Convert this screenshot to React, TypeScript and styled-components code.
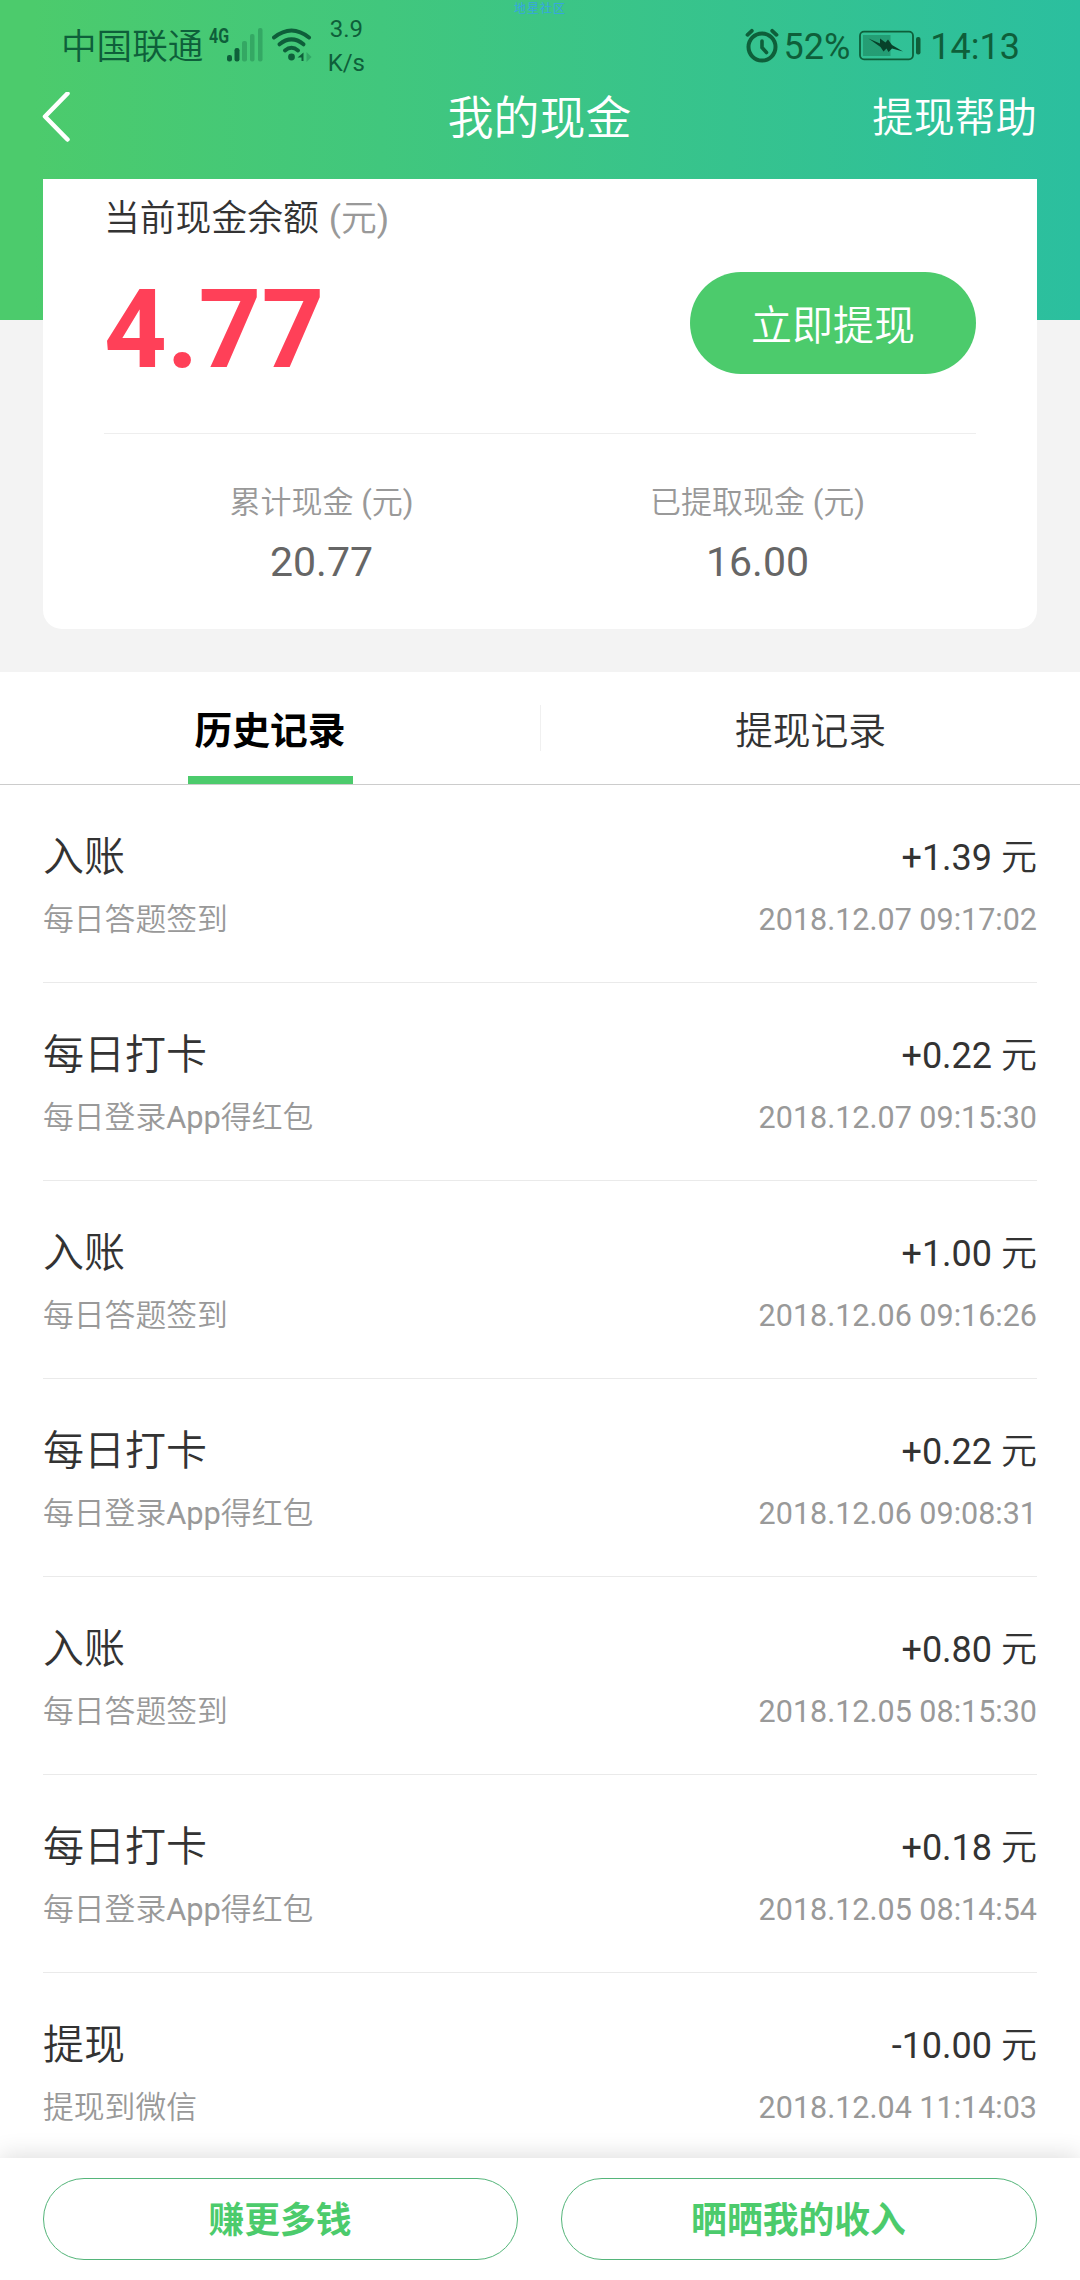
import React from 'react';
import styled, { createGlobalStyle, css } from 'styled-components';

const green = '#4ccb6c';
const ink = '#333';
const muted = '#999';
const statusInk = '#0e5f3a';

const GlobalStyle = createGlobalStyle`
  *, *::before, *::after { box-sizing: border-box; }
  body {
    margin: 0;
    background: #fff;
    color: ${ink};
    font-weight: 400;
  }
  button { font: inherit; padding: 0; margin: 0; border: 0; background: none; }
`;

const regularFont = css`
  font-family: Roboto, "Noto Sans CJK SC DemiLight", "Noto Sans CJK SC", sans-serif;
`;

const boldFont = css`
  font-family: Roboto, "Noto Sans CJK SC", sans-serif;
  font-weight: 700;
`;

const Screen = styled.div`
  ${regularFont}
  position: relative;
  display: flex;
  flex-direction: column;
  width: 1080px;
  height: 2280px;
  overflow: hidden;
  background: #fff;
`;

const Watermark = styled.span`
  position: absolute;
  top: 0;
  left: 514px;
  font-family: "Noto Sans CJK SC", sans-serif;
  font-size: 12px;
  line-height: 18px;
  letter-spacing: 1px;
  margin-top: -1px;
  color: #36a6e0;
`;

const Hero = styled.div`
  flex: none;
  height: 672px;
  background: linear-gradient(90deg, #4ccb6c 0%, #4ccb6c 3%, #2bbf9f 100%) no-repeat top / 100% 320px, #f3f3f3;
`;

const StatusBar = styled.div`
  display: flex;
  align-items: flex-start;
  height: 79px;
  padding: 0 60px 0 61px;
  color: ${statusInk};
`;

const Carrier = styled.span`
  margin-top: 21px;
  font-size: 35.6px;
  line-height: 52px;
`;

const NetworkType = styled.span`
  width: 19px;
  margin: 26px 0 0 6px;
  font-size: 21px;
  line-height: 20px;
  font-weight: 700;
  white-space: nowrap;
  transform: scaleX(0.76);
  transform-origin: left;
`;

const StatusIcon = styled.svg<{ $gap: number; $top: number }>`
  flex: none;
  margin: ${(p) => p.$top}px 0 0 ${(p) => p.$gap}px;
`;

const Speed = styled.span`
  width: 48px;
  margin: 13px 0 0 10px;
  font-size: 24px;
  line-height: 33.5px;
  text-align: center;
`;

const StatusText = styled.span<{ $gap?: number }>`
  margin: 21px 0 0 ${(p) => p.$gap ?? 0}px;
  font-size: 36px;
  line-height: 52px;
`;

const Spacer = styled.span`
  flex: 1;
`;

const TitleBar = styled.header`
  display: grid;
  grid-template-columns: 1fr auto 1fr;
  align-items: center;
  height: 100px;
  padding: 0 43px 0 42px;
  margin-top: -12px;
  color: #fff;
`;

const Title = styled.h1`
  margin: 2px 0 0;
  font-size: 46px;
  line-height: 60px;
  font-weight: 400;
`;

const Help = styled.button`
  justify-self: end;
  margin-top: 2px;
  font-size: 41.2px;
  line-height: 60px;
  color: #fff;
`;

const Card = styled.section`
  display: flex;
  flex-direction: column;
  height: 450px;
  margin: 12px 43px 0;
  padding: 0 61px;
  border-radius: 0 0 19px 19px;
  background: #fff;
`;

const Balance = styled.div`
  display: flex;
  align-items: flex-start;
  justify-content: space-between;
  height: 255px;
  border-bottom: 1px solid #eee;
`;

const BalanceLabel = styled.div`
  margin-top: 14px;
  font-size: 35.8px;
  line-height: 52px;
`;

const Unit = styled.span`
  margin-left: 1px;
  color: ${muted};
`;

const BalanceValue = styled.div`
  margin-top: 20px;
  font-size: 109.5px;
  line-height: 130px;
  font-weight: 700;
  color: #ff4058;
`;

const Withdraw = styled.button`
  width: 286px;
  height: 102px;
  margin-top: 93px;
  padding-top: 6px;
  border-radius: 51px;
  background: ${green};
  color: #fff;
  font-size: 41px;
  line-height: 96px;
`;

const Stats = styled.div`
  display: grid;
  grid-template-columns: 1fr 1fr;
  text-align: center;
`;

const StatLabel = styled.div`
  margin: 47px 0 0 -1px;
  font-size: 31px;
  line-height: 44px;
  color: ${muted};
`;

const StatValue = styled.div`
  margin: 9px 0 0 -1px;
  font-size: 41px;
  line-height: 56px;
  color: #666;
`;

const Tabs = styled.nav`
  flex: none;
  display: grid;
  grid-template-columns: 540px 1px 539px;
  height: 113px;
  border-bottom: 1px solid #ccc;
`;

const TabDivider = styled.span`
  height: 46px;
  margin-top: 33px;
  background: #f0f0f0;
`;

const Tab = styled.button<{ $active?: boolean }>`
  ${(p) => p.$active && boldFont}
  display: flex;
  flex-direction: column;
  align-items: center;
  justify-content: space-between;
  padding-top: 31px;
  font-size: 37.8px;
  line-height: 56px;
  color: ${(p) => (p.$active ? '#000' : ink)};
  &::after {
    content: '';
    width: 165px;
    height: 8px;
    background: ${(p) => (p.$active ? green : 'transparent')};
  }
`;

const List = styled.ul`
  flex: 1;
  min-height: 0;
  margin: 0;
  padding: 0 43px;
  list-style: none;
  overflow: hidden;
`;

const Row = styled.li`
  display: flex;
  justify-content: space-between;
  height: 198px;
  padding-top: 41px;
  border-bottom: 1px solid #eaeaea;
`;

const RowSide = styled.div<{ $end?: boolean }>`
  display: flex;
  flex-direction: column;
  text-align: ${(p) => (p.$end ? 'right' : 'left')};
`;

const RowTitle = styled.span`
  height: 64px;
  padding-top: 1px;
  font-size: 41px;
  line-height: 60px;
`;

const RowAmount = styled.span`
  height: 64px;
  font-size: 36px;
  line-height: 64px;
`;

const RowMeta = styled.span`
  font-size: 30.8px;
  line-height: 60px;
  color: ${muted};
`;

const RowDate = styled(RowMeta)`
  font-size: 30.5px;
  line-height: 60px;
`;

const Footer = styled.footer`
  position: relative;
  flex: none;
  display: grid;
  grid-template-columns: 475px 476px;
  gap: 43px;
  height: 122px;
  padding: 20px 43px;
  background: #fff;
  box-shadow: 0 -4px 22px rgba(0, 0, 0, 0.12);
`;

const FooterButton = styled.button`
  ${boldFont}
  height: 82px;
  padding: 5px 1px 0 0;
  border: 1px solid #55b57a;
  border-radius: 41px;
  color: ${green};
  font-size: 35.8px;
  line-height: 75px;
`;

const records = [
  { title: '入账', note: '每日答题签到', amount: '+1.39 元', date: '2018.12.07 09:17:02' },
  { title: '每日打卡', note: '每日登录App得红包', amount: '+0.22 元', date: '2018.12.07 09:15:30' },
  { title: '入账', note: '每日答题签到', amount: '+1.00 元', date: '2018.12.06 09:16:26' },
  { title: '每日打卡', note: '每日登录App得红包', amount: '+0.22 元', date: '2018.12.06 09:08:31' },
  { title: '入账', note: '每日答题签到', amount: '+0.80 元', date: '2018.12.05 08:15:30' },
  { title: '每日打卡', note: '每日登录App得红包', amount: '+0.18 元', date: '2018.12.05 08:14:54' },
  { title: '提现', note: '提现到微信', amount: '-10.00 元', date: '2018.12.04 11:14:03' },
];

const Signal = () => (
  <StatusIcon $gap={-1} $top={28} width="36" height="34" viewBox="0 0 36 34" fill={statusInk}>
    <rect x="0" y="27" width="5" height="6.5" rx="2.2" />
    <rect x="7.5" y="20" width="5" height="13.5" rx="2.2" />
    <g opacity="0.3">
      <rect x="15" y="13" width="5" height="20.5" rx="2" />
      <rect x="23" y="6" width="4.5" height="27.5" rx="2" />
      <rect x="31" y="0" width="4.5" height="33.5" rx="2" />
    </g>
  </StatusIcon>
);

const Wifi = () => (
  <StatusIcon $gap={9} $top={28} width="40" height="34" viewBox="0 0 40 34" fill="none" stroke={statusInk} strokeWidth="4" strokeLinecap="round">
    <path d="M2 9.5Q19.5-4.5 37 9.5" />
    <path d="M7.5 16.3Q19.5 6.5 31.5 16.3" />
    <path d="M13 22.5Q19.5 17 26 22.5" />
    <circle cx="19.5" cy="29" r="3.4" fill={statusInk} stroke="none" />
    <path d="M25.500 29.500l6-5v8.500h-2v-3.500z" fill={statusInk} stroke="none" />
    <path d="M34.500 24l5 5-5 5z" fill={statusInk} stroke="none" opacity="0.3" />
  </StatusIcon>
);

const Alarm = () => (
  <StatusIcon $gap={0} $top={28} width="34" height="35" viewBox="0 0 34 35" fill="none" stroke={statusInk} strokeLinecap="round">
    <circle cx="17" cy="19" r="13.5" strokeWidth="4" />
    <path d="M17 13V19.500l4.500 5" strokeWidth="3.600" />
    <path d="M2.500 6.800L6.800 2.800M31.500 6.800L27.200 2.800" strokeWidth="3.800" />
  </StatusIcon>
);

const Battery = () => (
  <StatusIcon $gap={9} $top={30} width="62" height="31" viewBox="0 0 62 31">
    <rect x="1" y="1.700" width="53" height="27.600" rx="4" fill="none" stroke={statusInk} strokeWidth="1.800" />
    <rect x="4" y="5" width="27.500" height="21" fill={statusInk} opacity="0.36" />
    <path d="M9.500 8.500L21 13.500V8.500L26.500 12.500 29 9.500 33 15 44 21.500 33 18.500 29.500 22 27.500 18.500 24.500 21.500 21.500 17Z" fill="#07412a" />
    <rect x="57" y="7" width="4.500" height="17.500" rx="2" fill={statusInk} />
  </StatusIcon>
);

const BackIcon = () => (
  <svg width="28" height="50" viewBox="0 1 28 50" fill="none" stroke="#fff" strokeWidth="4.500">
    <path d="M25.500 1.500L3 24.500 25.500 47.500" strokeLinejoin="round" strokeLinecap="round" transform="translate(0 1)" />
  </svg>
);

export default function App() {
  return (
    <Screen>
      <GlobalStyle />
      <Hero>
        <StatusBar>
          <Carrier>中国联通</Carrier>
          <NetworkType>4G</NetworkType>
          <Signal />
          <Wifi />
          <Speed>3.9 K/s</Speed>
          <Spacer />
          <Alarm />
          <StatusText $gap={5}>52%</StatusText>
          <Battery />
          <StatusText $gap={9}>14:13</StatusText>
        </StatusBar>
        <TitleBar>
          <BackIcon />
          <Title>我的现金</Title>
          <Help>提现帮助</Help>
        </TitleBar>
        <Card>
          <Balance>
            <div>
              <BalanceLabel>
                当前现金余额 <Unit>(元)</Unit>
              </BalanceLabel>
              <BalanceValue>4.77</BalanceValue>
            </div>
            <Withdraw>立即提现</Withdraw>
          </Balance>
          <Stats>
            <div>
              <StatLabel>累计现金 (元)</StatLabel>
              <StatValue>20.77</StatValue>
            </div>
            <div>
              <StatLabel>已提取现金 (元)</StatLabel>
              <StatValue>16.00</StatValue>
            </div>
          </Stats>
        </Card>
      </Hero>
      <Tabs>
        <Tab $active>历史记录</Tab>
        <TabDivider />
        <Tab>提现记录</Tab>
      </Tabs>
      <List>
        {records.map((r) => (
          <Row key={r.date}>
            <RowSide>
              <RowTitle>{r.title}</RowTitle>
              <RowMeta>{r.note}</RowMeta>
            </RowSide>
            <RowSide $end>
              <RowAmount>{r.amount}</RowAmount>
              <RowDate>{r.date}</RowDate>
            </RowSide>
          </Row>
        ))}
      </List>
      <Footer>
        <FooterButton>赚更多钱</FooterButton>
        <FooterButton>晒晒我的收入</FooterButton>
      </Footer>
      <Watermark>地星社区</Watermark>
    </Screen>
  );
}
